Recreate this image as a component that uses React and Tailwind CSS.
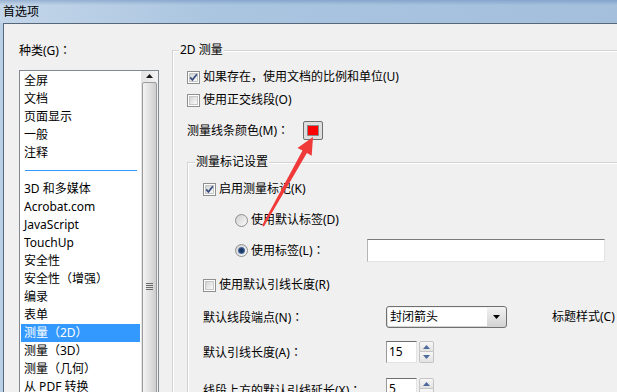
import React from "react";

const Colon = () => <span className="font-['Noto_Sans_CJK_JP',sans-serif]">：</span>;

const Check = ({ checked }) => (
  <div className="relative w-[13px] h-[13px] shrink-0 border border-[#8e8f8f] bg-white p-px">
    <div className="w-full h-full border border-[#c6c6c6] bg-gradient-to-br from-[#d4d4d4] to-[#fafafa]" />
    {checked && (
      <svg className="absolute inset-0" width="11" height="11" viewBox="0 0 11 11">
        <path d="M2.2 5.4 L4.4 7.9 L8.9 2.2" stroke="#3a4e80" strokeWidth="1.7" fill="none" />
      </svg>
    )}
  </div>
);

const Radio = ({ checked }) => (
  <div className="w-[13px] h-[13px] shrink-0 rounded-full border border-[#8e8f8f] bg-gradient-to-br from-[#cfcfcf] to-[#fbfbfb] flex items-center justify-center">
    {checked && (
      <div className="w-[7px] h-[7px] rounded-full bg-[radial-gradient(circle,#1d3866_35%,#7fb0e4)]" />
    )}
  </div>
);

const Tri = ({ up, color = "#000" }) => (
  <svg width="7" height="4" viewBox="0 0 7 4">
    <path d={up ? "M0 4 L3.5 0 L7 4Z" : "M0 0 H7 L3.5 4Z"} fill={color} />
  </svg>
);

const Spin = ({ value }) => (
  <div className="flex items-center gap-[2px]">
    <div className="w-[31px] h-[22px] border border-[#e3e3e3] border-t-[#6e6e6e] border-l-[#9a9a9a] bg-white pl-[2px] leading-[20px]">
      {value}
    </div>
    <div className="flex flex-col w-[15px] h-[22px]">
      <div className="h-[11px] border border-[#c4c4c4] rounded-t-[2px] bg-gradient-to-b from-[#f7f7f7] to-[#e2e2e2] flex items-center justify-center">
        <Tri up color="#4d6a9c" />
      </div>
      <div className="h-[11px] border border-t-0 border-[#c4c4c4] rounded-b-[2px] bg-gradient-to-b from-[#f7f7f7] to-[#e2e2e2] flex items-center justify-center">
        <Tri color="#4d6a9c" />
      </div>
    </div>
  </div>
);

const items = [
  "全屏",
  "文档",
  "页面显示",
  "一般",
  "注释",
  null,
  "3D 和多媒体",
  "Acrobat.com",
  "JavaScript",
  "TouchUp",
  "安全性",
  "安全性（增强）",
  "编录",
  "表单",
  "测量（2D）",
  "测量（3D）",
  "测量（几何）",
  "从 PDF 转换",
];

export default function App() {
  return (
    <div className="relative w-[617px] h-[392px] overflow-hidden bg-[#b9cfe6] font-['Noto_Sans','Noto_Sans_CJK_SC',sans-serif] text-[12px] leading-[16px] text-black">
      {/* title bar */}
      <div className="h-[23px] pl-[3px] flex items-center bg-[linear-gradient(to_bottom,rgba(70,110,170,0.35),transparent_5px),linear-gradient(to_right,#c4d6e9,#aac5e0_35%,#a3bfdc)]">
        首选项
      </div>
      {/* body */}
      <div className="ml-[3px] h-[369px] border-t border-l border-[#56677a] bg-[#f0f0f0] flex">
        {/* left column */}
        <div className="ml-[15px] mt-[18px] flex flex-col shrink-0">
          <div>
            种类(G)
            <Colon />
          </div>
          <div className="mt-[11px] w-[140px] h-[340px] border border-[#828790] bg-white flex">
            <div className="flex-1 pt-px px-px">
              {items.map((it, i) =>
                it === null ? (
                  <div key={i} className="h-[18px] pt-[8px] pl-[4px] pr-[3px]">
                    <div className="h-px bg-[#3399ff]" />
                  </div>
                ) : (
                  <div
                    key={i}
                    className={
                      "h-[18px] leading-[18px] pl-[3px] whitespace-nowrap " +
                      (it === "测量（2D）" ? "bg-[#3399ff] text-white" : "")
                    }
                  >
                    {it}
                  </div>
                )
              )}
            </div>
            {/* scrollbar */}
            <div className="w-[17px] flex flex-col bg-gradient-to-r from-[#e4e4e4] to-[#f2f2f2]">
              <div className="h-[18px] flex items-center justify-center">
                <Tri up color="#1a1a1a" />
              </div>
              <div className="mt-px mx-px h-[420px] rounded-[2px] border border-[#9b9b9b] bg-gradient-to-r from-[#f4f4f4] via-[#e1e1e1] to-[#cdcdcd] pt-[200px] flex flex-col items-center gap-[1px]">
                <div className="w-[7px] h-px bg-[#6a6a6a]" />
                <div className="w-[7px] h-px bg-[#6a6a6a]" />
                <div className="w-[7px] h-px bg-[#6a6a6a]" />
                <div className="w-[7px] h-px bg-[#6a6a6a]" />
              </div>
            </div>
          </div>
        </div>

        {/* right: outer group */}
        <div className="relative ml-[13px] mt-[26px] w-[500px] h-[400px] shrink-0 border border-[#d3d3d3] shadow-[inset_1px_1px_0_#ffffff] pl-[14px]">
          <div className="absolute -top-[9px] left-[6px] px-px bg-[#f0f0f0] whitespace-nowrap">2D 测量</div>

          <div className="mt-[18px] h-[16px] flex items-center gap-[3px] whitespace-nowrap">
            <Check checked />
            <span>如果存在，使用文档的比例和单位(U)</span>
          </div>
          <div className="mt-[7px] h-[16px] flex items-center gap-[3px] whitespace-nowrap">
            <Check />
            <span>使用正交线段(O)</span>
          </div>
          <div className="mt-[13px] h-[19px] flex items-center whitespace-nowrap">
            <span className="w-[116px]">
              测量线条颜色(M)
              <Colon />
            </span>
            <div className="w-[20px] h-[19px] rounded-[2px] border border-[#6f6f6f] bg-[#dedede] flex items-center justify-center">
              <div className="w-[12px] h-[11px] bg-[#ff0000] border border-[#8a8a8a]" />
            </div>
          </div>

          {/* nested group */}
          <div className="relative mt-[22px] w-[480px] h-[300px] border border-[#d3d3d3] shadow-[inset_1px_1px_0_#ffffff] pl-[15px]">
            <div className="absolute -top-[9px] left-[7px] px-px bg-[#f0f0f0] whitespace-nowrap">测量标记设置</div>

            <div className="mt-[18px] h-[16px] flex items-center gap-[3px] whitespace-nowrap">
              <Check checked />
              <span>启用测量标记(K)</span>
            </div>
            <div className="mt-[15px] h-[16px] pl-[32px] flex items-center gap-[3px] whitespace-nowrap">
              <Radio />
              <span>使用默认标签(D)</span>
            </div>
            <div className="mt-[11px] h-[23px] pl-[32px] flex items-center gap-[3px] whitespace-nowrap">
              <Radio checked />
              <span className="w-[113px]">
                使用标签(L)
                <Colon />
              </span>
              <div className="w-[238px] h-[23px] border border-[#e3e3e3] border-t-[#7a7a7a] border-l-[#b5b5b5] bg-white" />
            </div>
            <div className="mt-[15px] h-[16px] flex items-center gap-[3px] whitespace-nowrap">
              <Check />
              <span>使用默认引线长度(R)</span>
            </div>
            <div className="mt-[13px] h-[22px] flex items-center whitespace-nowrap">
              <span className="w-[183px]">
                默认线段端点(N)
                <Colon />
              </span>
              <div className="w-[121px] h-[22px] rounded-[3px] border border-[#707070] bg-gradient-to-b from-[#f3f3f3] to-[#d2d2d2] flex p-px">
                <div className="flex-1 bg-white pl-[2px] leading-[18px]">封闭箭头</div>
                <div className="w-[18px] flex items-center justify-center">
                  <Tri />
                </div>
              </div>
              <span className="ml-[45px]">标题样式(C)</span>
            </div>
            <div className="mt-[13px] h-[22px] flex items-center whitespace-nowrap">
              <span className="w-[183px]">
                默认引线长度(A)
                <Colon />
              </span>
              <Spin value="15" />
            </div>
            <div className="mt-[15px] h-[22px] flex items-center whitespace-nowrap">
              <span className="w-[183px] pt-[2px]">
                线段上方的默认引线延长(X)
                <Colon />
              </span>
              <Spin value="5" />
            </div>
          </div>
        </div>
      </div>

      {/* red annotation arrow */}
      <svg className="absolute left-0 top-0 pointer-events-none" width="617" height="392" viewBox="0 0 617 392">
        <polygon
          points="313,137 311.7,155.7 306.9,153 263.9,226.6 262.1,225.4 302.5,150.6 297.5,147.9"
          fill="#f03a3a"
        />
      </svg>
    </div>
  );
}
